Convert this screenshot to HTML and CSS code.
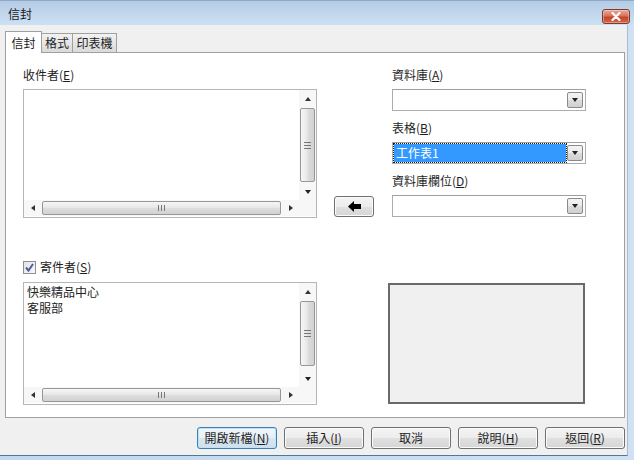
FILE: index.html
```html
<!DOCTYPE html>
<html lang="zh-Hant">
<head>
    <meta charset="UTF-8">
    <title>信封</title>
    <link rel="stylesheet" href="styles.css">
</head>
<body>
    <div class="window">
        <div class="titlebar">
            <span class="title">信封</span>
            <div class="close-btn">
                <svg width="10" height="9" viewBox="0 0 10 9"><path d="M1.5 1 L8.5 8 M8.5 1 L1.5 8" stroke="#fff" stroke-width="2.2" stroke-linecap="round"/></svg>
            </div>
        </div>

        <div class="client">
            <div class="tabs">
                <div class="tab active">信封</div>
                <div class="tab tab-format">格式</div>
                <div class="tab tab-printer">印表機</div>
            </div>

            <div class="panel">
                <div class="top-row">
                    <div class="left-col">
                        <div class="label">收件者(<u>E</u>)</div>
                        <div class="listbox recipients">
                            <div class="list-content"></div>
                            <div class="vscroll">
                                <div class="sb-arrow"><span class="tri-up"></span></div>
                                <div class="thumb-v"><span class="grip-v"></span></div>
                                <div class="sb-arrow"><span class="tri-down"></span></div>
                            </div>
                            <div class="hscroll">
                                <div class="sb-arrow"><span class="tri-left"></span></div>
                                <div class="thumb-h"><span class="grip-h"></span></div>
                                <div class="sb-arrow"><span class="tri-right"></span></div>
                            </div>
                            <div class="corner"></div>
                        </div>
                    </div>

                    <div class="mid-col">
                        <div class="btn arrow-btn">
                            <svg width="13" height="11" viewBox="0 0 13 11"><polygon points="0,5.5 6,0 6,3 13,3 13,8 6,8 6,11" fill="#000"/></svg>
                        </div>
                    </div>

                    <div class="right-col">
                        <div class="label">資料庫(<u>A</u>)</div>
                        <div class="combo">
                            <div class="combo-field"></div>
                            <div class="combo-btn"><span class="tri-down"></span></div>
                        </div>
                        <div class="label">表格(<u>B</u>)</div>
                        <div class="combo">
                            <div class="combo-field selected">工作表1</div>
                            <div class="combo-btn"><span class="tri-down"></span></div>
                        </div>
                        <div class="label">資料庫欄位(<u>D</u>)</div>
                        <div class="combo last">
                            <div class="combo-field"></div>
                            <div class="combo-btn"><span class="tri-down"></span></div>
                        </div>
                    </div>
                </div>

                <div class="bottom-row">
                    <div class="left-col">
                        <div class="check-row">
                            <span class="checkbox">
                                <svg width="11" height="11" viewBox="0 0 11 11"><path d="M2 5.5 L4.5 8.5 L9 2" fill="none" stroke="#4a5f9c" stroke-width="2"/></svg>
                            </span>
                            <span class="check-text">寄件者(<u>S</u>)</span>
                        </div>
                        <div class="listbox sender">
                            <div class="list-content">
                                <div>快樂精品中心</div>
                                <div>客服部</div>
                            </div>
                            <div class="vscroll">
                                <div class="sb-arrow"><span class="tri-up"></span></div>
                                <div class="thumb-v short"><span class="grip-v"></span></div>
                                <div class="sb-arrow"><span class="tri-down"></span></div>
                            </div>
                            <div class="hscroll">
                                <div class="sb-arrow"><span class="tri-left"></span></div>
                                <div class="thumb-h"><span class="grip-h"></span></div>
                                <div class="sb-arrow"><span class="tri-right"></span></div>
                            </div>
                            <div class="corner"></div>
                        </div>
                    </div>
                    <div class="preview"></div>
                </div>
            </div>

            <div class="buttons">
                <div class="btn default">開啟新檔(<u>N</u>)</div>
                <div class="btn">插入(<u>I</u>)</div>
                <div class="btn">取消</div>
                <div class="btn">說明(<u>H</u>)</div>
                <div class="btn">返回(<u>R</u>)</div>
            </div>
        </div>
    </div>
</body>
</html>
```

FILE: styles.css
```css
* {
    box-sizing: border-box;
    margin: 0;
    padding: 0;
}

body {
    width: 634px;
    height: 460px;
    overflow: hidden;
    font-family: "Noto Sans CJK TC", "Noto Sans", sans-serif;
    font-size: 12px;
    line-height: 14px;
    color: #1e1e1e;
    background: #c7dbf0;
}

u {
    text-decoration: underline;
    text-underline-offset: 1px;
}

.window {
    width: 634px;
    height: 460px;
    display: flex;
    flex-direction: column;
    background: linear-gradient(to right, #c3d8ee, #cfe1f3);
    border-top: 1px solid #93a9c2;
}

/* title bar */
.titlebar {
    height: 24px;
    display: flex;
    justify-content: space-between;
    align-items: flex-start;
    padding: 0 4px 0 8px;
    background: linear-gradient(#b4cce7, #c3d8ee 60%, #cde0f3);
}

.title {
    margin-top: 6px;
    color: #1a1a1a;
}

.close-btn {
    margin-top: 8px;
    width: 28px;
    height: 15px;
    display: flex;
    align-items: center;
    justify-content: center;
    border: 1px solid #7a3a2c;
    border-radius: 3px;
    background: linear-gradient(#eaa99a, #d9735c 45%, #c4452a 55%, #d0674c);
    box-shadow: inset 0 0 0 1px rgba(255, 255, 255, 0.35);
}

/* client area */
.client {
    flex: 1;
    margin-right: 6px;
    margin-bottom: 4px;
    padding: 6px 2px 0 5px;
    display: flex;
    flex-direction: column;
    background: #f0f0f0;
    border-bottom: 1px solid #4b7b98;
    border-right: 1px solid #a7bdd3;
}

/* tabs */
.tabs {
    display: flex;
    align-items: flex-end;
    height: 22px;
    margin-bottom: -1px;
}

.tab {
    height: 19px;
    margin-bottom: 1px;
    border: 1px solid #a0a0a0;
    border-bottom: none;
    border-left: none;
    background: linear-gradient(#f2f2f2, #e6e6e6 50%, #dadada);
    text-align: center;
    line-height: 17px;
}

.tab.active {
    position: relative;
    z-index: 1;
    height: 22px;
    margin-bottom: 0;
    width: 37px;
    border-left: 1px solid #a0a0a0;
    background: #fff;
    line-height: 21px;
}

.tab-format {
    width: 31px;
}

.tab-printer {
    width: 44px;
}

.panel {
    height: 366px;
    border: 1px solid #a0a0a0;
    background: #fff;
    padding: 15px 0 0 17px;
}

.top-row {
    display: flex;
}

.left-col {
    width: 294px;
}

.mid-col {
    width: 40px;
    margin: 0 18px 0 17px;
    display: flex;
    align-items: flex-end;
}

.right-col {
    width: 194px;
}

.label {
    margin-bottom: 7px;
}

/* list boxes */
.listbox {
    display: grid;
    grid-template-columns: 1fr 17px;
    grid-template-rows: 1fr 16px;
    border: 1px solid #b5b5b5;
    background: #fff;
    padding-bottom: 1px;
}

.recipients {
    height: 129px;
}

.sender {
    height: 123px;
}

.list-content {
    padding: 1px 3px;
    line-height: 16px;
    color: #222;
}

.vscroll {
    display: flex;
    flex-direction: column;
    background: #f7f7f7;
}

.hscroll {
    display: flex;
    background: #f7f7f7;
}

.corner {
    background: #f7f7f7;
}

.sb-arrow {
    flex: 0 0 17px;
    display: flex;
    align-items: center;
    justify-content: center;
}

.thumb-v {
    flex: 1;
    margin: 1px;
    border: 1px solid #979797;
    border-radius: 2px;
    background: linear-gradient(to right, #f6f6f6, #e8e8e8 45%, #dcdcdc 55%, #d2d2d2);
    display: flex;
    align-items: center;
    justify-content: center;
}

.thumb-v.short {
    margin-bottom: 4px;
}

.thumb-h {
    flex: 1;
    margin: 1px;
    border: 1px solid #979797;
    border-radius: 2px;
    background: linear-gradient(#f6f6f6, #e8e8e8 45%, #dcdcdc 55%, #d2d2d2);
    display: flex;
    align-items: center;
    justify-content: center;
}

.grip-v {
    width: 7px;
    height: 7px;
    background: repeating-linear-gradient(#777 0 1px, transparent 1px 3px);
}

.grip-h {
    width: 7px;
    height: 6px;
    background: repeating-linear-gradient(to right, #777 0 1px, transparent 1px 3px);
}

.tri-up, .tri-down, .tri-left, .tri-right {
    width: 0;
    height: 0;
    border-style: solid;
    border-color: transparent;
}

.tri-up {
    border-width: 0 3.5px 4px 3.5px;
    border-bottom-color: #333;
}

.tri-down {
    border-width: 4px 3.5px 0 3.5px;
    border-top-color: #222;
}

.tri-left {
    border-width: 3.5px 4px 3.5px 0;
    border-right-color: #333;
}

.tri-right {
    border-width: 3.5px 0 3.5px 4px;
    border-left-color: #333;
}

/* combo boxes */
.combo {
    height: 22px;
    margin-bottom: 10px;
    display: flex;
    padding: 2px 2px 2px 1px;
    border: 1px solid #abadb3;
    border-top-color: #9c9ea4;
    background: #fff;
}

.combo.last {
    margin-bottom: 0;
}

.combo-field {
    flex: 1;
    padding-left: 2px;
    line-height: 16px;
}

.combo-field.selected {
    background: #3399ff;
    color: #fff;
    outline: 1px dotted #1a1a1a;
    margin: -1px 1px -1px 0;
    line-height: 18px;
}

.combo-btn {
    width: 16px;
    border: 1px solid #8a8a8a;
    border-radius: 2px;
    background: linear-gradient(#f4f4f4, #e9e9e9 50%, #dcdcdc 50%, #d0d0d0);
    display: flex;
    align-items: center;
    justify-content: center;
}

/* sender area */
.bottom-row {
    display: flex;
    margin-top: 42px;
}

.check-row {
    display: flex;
    align-items: center;
    gap: 4px;
    height: 14px;
    margin-bottom: 8px;
}

.checkbox {
    width: 13px;
    height: 13px;
    border: 1px solid #8e8f8f;
    background: linear-gradient(135deg, #e4e4e4, #f8f8f8);
    display: flex;
    align-items: center;
    justify-content: center;
}

.preview {
    align-self: flex-end;
    width: 197px;
    height: 121px;
    margin: 0 0 1px 71px;
    border: 2px solid #6a6a6a;
    background: #f0f0f0;
}

/* buttons */
.btn {
    height: 22px;
    display: flex;
    align-items: center;
    justify-content: center;
    border: 1px solid #707070;
    border-radius: 3px;
    background: linear-gradient(#f4f4f4, #ececec 50%, #e0e0e0 50%, #d6d6d6);
    box-shadow: inset 0 0 0 1px #fbfbfb;
    color: #1e1e1e;
}

.arrow-btn {
    width: 40px;
    height: 21px;
    margin-bottom: 1px;
}

.buttons {
    display: flex;
    justify-content: flex-end;
    gap: 7px;
    margin-top: 9px;
}

.buttons .btn {
    width: 80px;
}

.btn.default {
    border-color: #3c7fb1;
    background: linear-gradient(#f0f6fa, #e7f0f6 50%, #d8e6ef 50%, #d0e0eb);
    box-shadow: inset 0 0 0 1px #bfe3f7;
}
```
